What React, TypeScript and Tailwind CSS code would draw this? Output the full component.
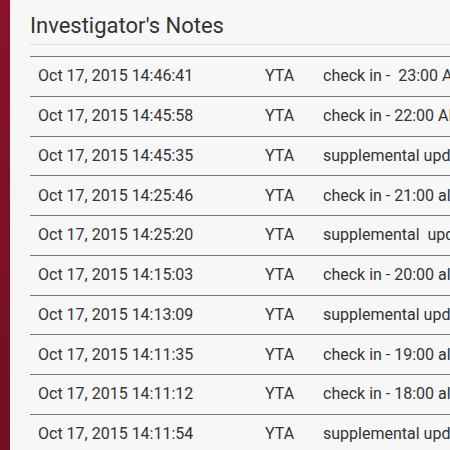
const notes = [
  { time: "Oct 17, 2015 14:46:41", who: "YTA", text: "check in -  23:00 AM update" },
  { time: "Oct 17, 2015 14:45:58", who: "YTA", text: "check in - 22:00 AM update" },
  { time: "Oct 17, 2015 14:45:35", who: "YTA", text: "supplemental update" },
  { time: "Oct 17, 2015 14:25:46", who: "YTA", text: "check in - 21:00 all clear" },
  { time: "Oct 17, 2015 14:25:20", who: "YTA", text: "supplemental  update" },
  { time: "Oct 17, 2015 14:15:03", who: "YTA", text: "check in - 20:00 all clear" },
  { time: "Oct 17, 2015 14:13:09", who: "YTA", text: "supplemental update" },
  { time: "Oct 17, 2015 14:11:35", who: "YTA", text: "check in - 19:00 all clear" },
  { time: "Oct 17, 2015 14:11:12", who: "YTA", text: "check in - 18:00 all clear" },
  { time: "Oct 17, 2015 14:11:54", who: "YTA", text: "supplemental update" },
];

export default function App() {
  return (
    <div className="flex h-[450px] w-[450px] overflow-hidden bg-[#f7f7f7] font-['Roboto',sans-serif] text-[#333333]">
      {/* side bar */}
      <div className="w-[10px] shrink-0 bg-gradient-to-b from-[#8b1227] to-[#701020]" />

      <div className="ml-[20px] flex-1 min-w-0">
        <h1 className="pt-[12px] h-[44px] text-[22px] leading-[28px] font-normal text-[#333333] whitespace-nowrap">
          Investigator's Notes
        </h1>
        <div className="h-px bg-[#dddddd]" />

        <div className="mt-[11px]">
          {notes.map((n) => (
            <div
              key={n.time}
              className="flex h-[39.75px] items-center border-t border-[#777777] text-[16px] whitespace-pre"
            >
              <div className="w-[235px] shrink-0 pl-[8px]">{n.time}</div>
              <div className="w-[58px] shrink-0">{n.who}</div>
              <div className="overflow-hidden">{n.text}</div>
            </div>
          ))}
        </div>
      </div>
    </div>
  );
}
